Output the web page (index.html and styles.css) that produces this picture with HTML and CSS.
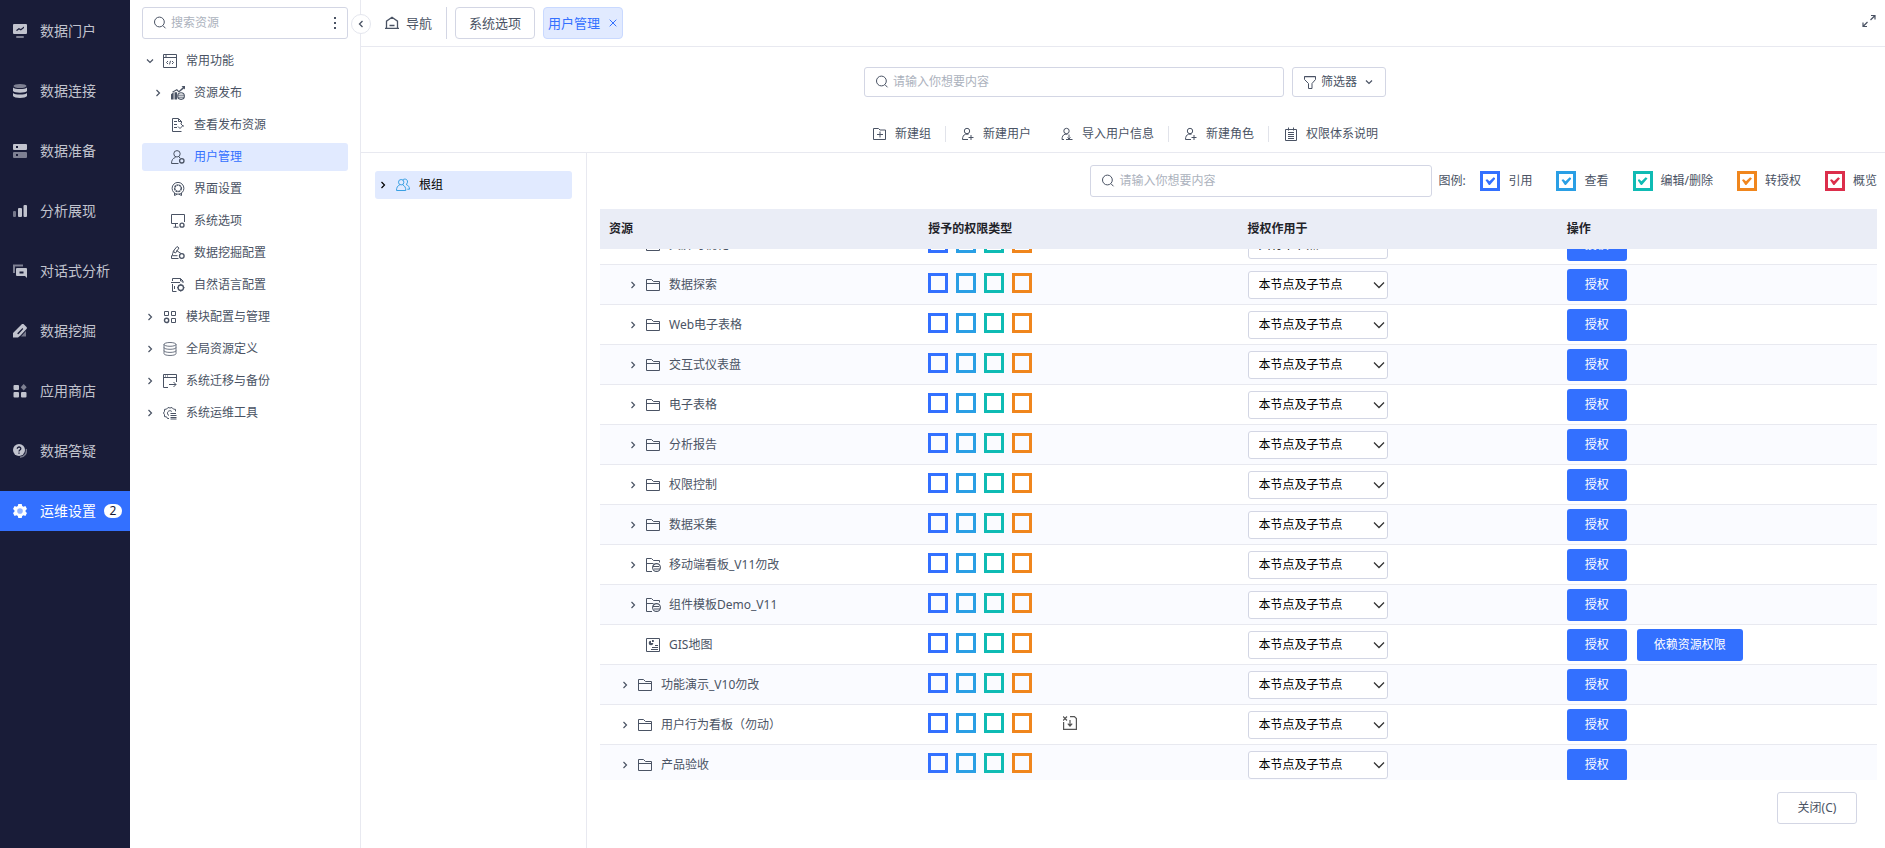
FILE: index.html
```html
<!DOCTYPE html>
<html lang="zh-CN">
<head>
<meta charset="utf-8">
<title>用户管理</title>
<link rel="stylesheet" href="styles.css">
</head>
<body>
<svg class="sprite" aria-hidden="true">
  <symbol id="i-portal" viewBox="0 0 14 14"><path fill="currentColor" fill-rule="evenodd" d="M1 0h12a1 1 0 0 1 1 1v8a1 1 0 0 1-1 1H1a1 1 0 0 1-1-1V1a1 1 0 0 1 1-1zM3 6.2l1 .9 2-1.7 1.9 1L11 4V2.6L7.800 4.900 5.900 3.900z"/><path fill="currentColor" opacity=".6" d="M4 12h6a1 1 0 0 1 0 2H4a1 1 0 0 1 0-2z"/></symbol>
  <symbol id="i-db" viewBox="0 0 14 14"><ellipse cx="7" cy="2" rx="6.500" ry="2" fill="currentColor" opacity=".6"/><path fill="currentColor" d="M0 3.500c2 2 12 2 14 0V7c-1 2.300-13 2.300-14 0zM0 9c2 2 12 2 14 0v3c-1 2.600-13 2.600-14 0z"/></symbol>
  <symbol id="i-server" viewBox="0 0 14 14"><path fill="currentColor" fill-rule="evenodd" d="M1 0h12a1 1 0 0 1 1 1v4a1 1 0 0 1-1 1H1a1 1 0 0 1-1-1V1a1 1 0 0 1 1-1zM3 2v2h2V2z"/><path fill="currentColor" opacity=".6" fill-rule="evenodd" d="M1 8h12a1 1 0 0 1 1 1v4a1 1 0 0 1-1 1H1a1 1 0 0 1-1-1V9a1 1 0 0 1 1-1zM3 10v2h2v-2z"/></symbol>
  <symbol id="i-bars" viewBox="0 0 14 14"><rect x="0" y="7" width="3" height="6" rx="1" fill="currentColor" opacity=".55"/><rect x="5" y="4" width="4" height="9" rx="1" fill="currentColor"/><rect x="10.500" y="1" width="3.500" height="12" rx="1" fill="currentColor"/></symbol>
  <symbol id="i-chat" viewBox="0 0 14 14"><path d="M1 9V1.500h9" fill="none" stroke="currentColor" stroke-width="2" opacity=".6"/><path fill="currentColor" fill-rule="evenodd" d="M4 4h9a1 1 0 0 1 1 1v9l-2-2H4a1 1 0 0 1-1-1V5a1 1 0 0 1 1-1zM6.500 7.500v2h4v-2z"/></symbol>
  <symbol id="i-mine" viewBox="0 0 14 14"><path fill="currentColor" fill-rule="evenodd" d="M9 0c1-.5 1.500 0 2 .5L13.500 3c.6.700.5 1 .2 1.700L7.500 11.500 5 13.500H0V9zM9.500 4L4.500 9c-.5 1 .5 1.500 1.200 1l4.500-5z"/><path fill="currentColor" opacity=".55" d="M13 7v5.500H8z"/></symbol>
  <symbol id="i-apps" viewBox="0 0 14 14"><g fill="currentColor"><rect x=".5" y="1" width="5.500" height="5" rx="1"/><rect x=".5" y="8" width="5.500" height="5.500" rx="1"/><rect x="8" y="8" width="5.500" height="5.500" rx="1"/><path opacity=".6" d="M10.700 0l3 3.200-3 3.200-3-3.200z"/></g></symbol>
  <symbol id="i-qa" viewBox="0 0 14 14"><path opacity=".55" d="M13.300 5c.8 4-1.600 8-6.300 8.200" fill="none" stroke="currentColor" stroke-width="1.400"/><circle cx="6" cy="6" r="6" fill="currentColor"/><path d="M4.300 4.700c0-2.300 3.600-2.200 3.500 0C7.700 6 6 6 6 7.400M6 8.500v1.300" fill="none" stroke="#191c38" stroke-width="1.300"/></symbol>
  <symbol id="i-gear" viewBox="0 0 14 14"><path fill="currentColor" d="M5.300 0h3.400l.5 2 1.300.7 1.900-.6L14 5l-1.400 1.300v1.400L14 9l-1.600 2.900-1.900-.6-1.300.7-.5 2H5.300l-.5-2-1.300-.7-1.900.6L0 9l1.400-1.300V6.300L0 5l1.600-2.900 1.900.6L4.800 2z"/><circle cx="7" cy="7" r="2.800" fill="#94b4ff"/></symbol>
  <symbol id="i-search" viewBox="0 0 14 14"><g fill="none" stroke="currentColor"><circle cx="6.400" cy="6" r="4.900"/><path d="M10 9.700l2.500 2.600"/></g></symbol>
  <symbol id="i-more" viewBox="0 0 4 14"><path fill="currentColor" d="M1 1h2v2H1zM1 6h2v2H1zM1 11h2v2H1z"/></symbol>
  <symbol id="i-right" viewBox="0 0 8 8"><path d="M2.500 1l3 3-3 3" fill="none" stroke="currentColor" stroke-width="1.200"/></symbol>
  <symbol id="i-down" viewBox="0 0 8 8"><path d="M1 2.500l3 3 3-3" fill="none" stroke="currentColor" stroke-width="1.200"/></symbol>
  <symbol id="i-left" viewBox="0 0 8 8"><path d="M5.500 1l-3 3 3 3" fill="none" stroke="currentColor" stroke-width="1.300"/></symbol>
  <symbol id="i-code" viewBox="0 0 14 14"><path fill="none" stroke="currentColor" d="M.5.5h13v13H.5zM.5 3.500h13M2 2h2M5 7L3.500 8.500 5 10M9 7l1.500 1.500L9 10M7.500 6.800l-1 3.600"/></symbol>
  <symbol id="i-publish" viewBox="0 0 16 16"><path fill="currentColor" d="M0 9.500L3 7v8.500H0zM4 7h3v8.500H4zM12 0h4v4l-1.200-1.200L9 7.500 6.500 5 2 7.500 1.300 6.500 6.800 3.500 9 5.800 13.500 1.500z"/><circle cx="11.500" cy="11.500" r="3.800" fill="#fff" stroke="currentColor" stroke-width="1.200"/><path d="M8 10.500h7M8 12.800h7" stroke="currentColor"/></symbol>
  <symbol id="i-docview" viewBox="0 0 14 14"><path fill="none" stroke="currentColor" d="M10.500 13.500h-9V.5h6l3 3v2M3 3.500h3M3 6.500h3M3 9.500h3M7 8.500l2 2L12.500 7M7.500 1v2.500h3M9.500 5.500l3 3"/></symbol>
  <symbol id="i-userset" viewBox="0 0 14 14"><g fill="none" stroke="currentColor"><path d="M7.500 13.500h-7c0-3.500 1.500-5.500 4-6M8 7.200l1.300.8"/><circle cx="6" cy="3.800" r="3.200"/><circle cx="10.800" cy="10.800" r="2.200" stroke-width="1.300"/></g></symbol>
  <symbol id="i-medal" viewBox="0 0 14 14"><g fill="none" stroke="currentColor"><circle cx="7" cy="6.300" r="5.900"/><circle cx="7" cy="6.300" r="3.300" stroke-width="1.500" stroke-dasharray="2.200 .5"/><path d="M3.500 11v2.500L6 12.300M10.500 11v2.500L8 12.300"/></g></symbol>
  <symbol id="i-monitor" viewBox="0 0 14 14"><g fill="none" stroke="currentColor"><path d="M7 9.500H.5v-9h13v7.500M4.500 9.500v3.500M2.500 13.200h5"/><circle cx="11" cy="11.200" r="2" stroke-width="1.300"/></g></symbol>
  <symbol id="i-dig" viewBox="0 0 14 14"><g fill="none" stroke="currentColor"><path d="M7.500 12.500H.5v-2.800h6M1.500 9c0-2 .5-3 2-4M2 5.500l4-5 2 1.500-3.500 5zM5.500 4.500l4.500 3"/><circle cx="10.800" cy="10" r="2.300" stroke-width="1.300"/></g></symbol>
  <symbol id="i-lang" viewBox="0 0 14 14"><g fill="none" stroke="currentColor"><path d="M1.500 6v7.500h4M1.500 3V.5h8l2.500 2.500v2M0 4.500h9M9.500.5V3H12M3.500 8v3"/><circle cx="9.800" cy="9.700" r="2.700" stroke-width="1.300"/><path d="M9.800 5.800v1.200M9.800 12.400v1.400M6 9.700h1M12.600 9.700h1"/></g></symbol>
  <symbol id="i-modules" viewBox="0 0 14 14"><g fill="none" stroke="currentColor"><path d="M1.500 1.500h4v4h-4zM8.500 1.500h4v4h-4zM8.500 8.500h4v4h-4z"/><circle cx="3.600" cy="10.400" r="2.100" stroke-width="1.400"/></g></symbol>
  <symbol id="i-stack" viewBox="0 0 14 14"><g fill="none" stroke="currentColor" stroke-width=".8"><ellipse cx="7" cy="2.400" rx="6" ry="1.900"/><path d="M1 2.400v9.200c0 2.500 12 2.500 12 0V2.400M1 5.500c0 2.400 12 2.400 12 0M1 8.600c0 2.400 12 2.400 12 0"/></g></symbol>
  <symbol id="i-migrate" viewBox="0 0 14 14"><path fill="none" stroke="currentColor" d="M5 13.500H.5V.5h13v7.500M.5 3.500h13M2 2h1M4 2h1M6 10.500h7M10.500 8l2.500 2.500-2.500 2.500"/></symbol>
  <symbol id="i-ops" viewBox="0 0 14 14"><g fill="none" stroke="currentColor"><path d="M6 12.500H4.500L3.600 10.900 1.500 10.600V8.700L.5 7l1-1.700V3.400l2.100-.3L5 1.500 7 2l2-.5 1.400 1.600 2.100.3v2"/><path d="M8.800 5.500a2.500 2.500 0 1 0-2.800 4M7.500 7.500H13M7.500 9.500h6M7.500 11.500h6M7.500 13h6"/></g></symbol>
  <symbol id="i-home" viewBox="0 0 14 14"><path fill="none" stroke="currentColor" stroke-width="1.300" d="M0 12.300h14M1.500 12V5.200L7 1.200l5.500 4V12M4.500 9.500h5"/></symbol>
  <symbol id="i-close" viewBox="0 0 8 8"><path d="M.7.700l6.600 6.600M7.300.7L.7 7.300" stroke="currentColor"/></symbol>
  <symbol id="i-expand" viewBox="0 0 14 14"><path fill="none" stroke="currentColor" stroke-width="1.200" d="M9 1.500h4v4M13 1.500L8.500 6M1 8.500v4h4M1 12.500L5.500 8"/></symbol>
  <symbol id="i-filter" viewBox="0 0 14 14"><path fill="none" stroke="currentColor" d="M1.500 1.500h11v3L9 8.500v5H5.500v-5l-4-4z"/><path d="M1 2h12" stroke="currentColor" opacity=".5"/></symbol>
  <symbol id="i-newgroup" viewBox="0 0 14 14"><path fill="none" stroke="currentColor" d="M.5 12.500V1.500h5l1.500 1.500h5.500v9.500zM4 7.500h6M7 4.500v6"/></symbol>
  <symbol id="i-newuser" viewBox="0 0 14 14"><g fill="none" stroke="currentColor"><circle cx="6" cy="4" r="2.700"/><path d="M7 12.500H1.500c0-3 1-4.500 3-5.300h3M7.500 10.500h5M10 8v5"/></g></symbol>
  <symbol id="i-import" viewBox="0 0 14 14"><g fill="none" stroke="currentColor"><circle cx="6.500" cy="4" r="2.700"/><path d="M4 12.500H2c0-3 1-4.500 3-5.300h2.500M12.500 12.500H6M9 7.500v4.500M7.500 10.500L9 12l1.500-1.500"/></g></symbol>
  <symbol id="i-note" viewBox="0 0 14 14"><path fill="none" stroke="currentColor" d="M1.500 2.500h11v11h-11zM4.500.5v3M9.500.5v3M4 5.500h6M4 7.500h6M4 9.500h6M4 11.500h6"/></symbol>
  <symbol id="i-users" viewBox="0 0 14 14"><g fill="none" stroke="currentColor"><circle cx="5.200" cy="4.200" r="2.700"/><path d="M3.800 6.800C1.500 7.800.5 9.500.5 12.500h9.300c0-3-1-4.700-3.200-5.700M6.700 2C8 .5 11.800.7 11.500 4c-.1 1.300-.8 2-1.500 2.400 2.300.8 3.500 2.600 3.500 4.800h-2.200"/></g></symbol>
  <symbol id="i-folder" viewBox="0 0 16 14"><path fill="none" stroke="currentColor" d="M1.500 12.500v-11h5l2 2h6v9zM1.500 5.500h13"/></symbol>
  <symbol id="i-folderlink" viewBox="0 0 16 14"><g fill="none" stroke="currentColor"><path d="M7 13.500H1.500V.5h5l2 2h6v2M1.500 5.500h7"/><circle cx="11.500" cy="9.500" r="3.900" stroke-width="1.100"/><path d="M8 8.500h6M9 11h6"/></g></symbol>
  <symbol id="i-report" viewBox="0 0 16 14"><path fill="none" stroke="currentColor" d="M1.500.5h13v13h-13zM10 7.500h3M7 9.500h6M6 11.500h7"/><circle cx="6" cy="5" r="2.300" fill="currentColor"/><path fill="#fff" d="M6 5V2h3v3z"/><path fill="currentColor" d="M7 2h1.800v2H7z"/></symbol>
  <symbol id="i-inherit" viewBox="0 0 14 14"><path fill="none" stroke="currentColor" stroke-width="1.200" d="M.6 6v7.400h12.800V2.500l-2-1.900H7M7 4v6M4.800 7.600L7 10l2.200-2.400M0 .5l4 4M4 .5l-4 4"/></symbol>
  <symbol id="i-select" viewBox="0 0 12 8"><path d="M1 1.500l5 5 5-5" fill="none" stroke="currentColor" stroke-width="1.300"/></symbol>
</svg>

<div class="app">
  <nav class="nav" aria-label="主导航">
    <a class="nav-item" href="#"><svg class="ic"><use href="#i-portal"/></svg>数据门户</a>
    <a class="nav-item" href="#"><svg class="ic"><use href="#i-db"/></svg>数据连接</a>
    <a class="nav-item" href="#"><svg class="ic"><use href="#i-server"/></svg>数据准备</a>
    <a class="nav-item" href="#"><svg class="ic"><use href="#i-bars"/></svg>分析展现</a>
    <a class="nav-item" href="#"><svg class="ic"><use href="#i-chat"/></svg>对话式分析</a>
    <a class="nav-item" href="#"><svg class="ic"><use href="#i-mine"/></svg>数据挖掘</a>
    <a class="nav-item" href="#"><svg class="ic"><use href="#i-apps"/></svg>应用商店</a>
    <a class="nav-item" href="#"><svg class="ic"><use href="#i-qa"/></svg>数据答疑</a>
    <a class="nav-item active" href="#"><svg class="ic"><use href="#i-gear"/></svg>运维设置<span class="badge">2</span></a>
  </nav>

  <aside class="side">
    <div class="field side-search">
      <svg class="ic"><use href="#i-search"/></svg>
      <input type="text" placeholder="搜索资源" aria-label="搜索资源">
      <button class="plain" type="button" aria-label="更多"><svg class="ic-more"><use href="#i-more"/></svg></button>
    </div>
    <a class="node" href="#"><svg class="chev"><use href="#i-down"/></svg><svg class="ic"><use href="#i-code"/></svg>常用功能</a>
    <a class="node sub" href="#"><svg class="chev"><use href="#i-right"/></svg><svg class="ic"><use href="#i-publish"/></svg>资源发布</a>
    <a class="node sub" href="#"><span class="chev"></span><svg class="ic"><use href="#i-docview"/></svg>查看发布资源</a>
    <a class="node sub active" href="#"><span class="chev"></span><svg class="ic"><use href="#i-userset"/></svg><span class="node-name">用户管理</span></a>
    <a class="node sub" href="#"><span class="chev"></span><svg class="ic"><use href="#i-medal"/></svg>界面设置</a>
    <a class="node sub" href="#"><span class="chev"></span><svg class="ic"><use href="#i-monitor"/></svg>系统选项</a>
    <a class="node sub" href="#"><span class="chev"></span><svg class="ic"><use href="#i-dig"/></svg>数据挖掘配置</a>
    <a class="node sub" href="#"><span class="chev"></span><svg class="ic"><use href="#i-lang"/></svg>自然语言配置</a>
    <a class="node" href="#"><svg class="chev"><use href="#i-right"/></svg><svg class="ic"><use href="#i-modules"/></svg>模块配置与管理</a>
    <a class="node" href="#"><svg class="chev"><use href="#i-right"/></svg><svg class="ic"><use href="#i-stack"/></svg>全局资源定义</a>
    <a class="node" href="#"><svg class="chev"><use href="#i-right"/></svg><svg class="ic"><use href="#i-migrate"/></svg>系统迁移与备份</a>
    <a class="node" href="#"><svg class="chev"><use href="#i-right"/></svg><svg class="ic"><use href="#i-ops"/></svg>系统运维工具</a>
    <button class="collapse" type="button" aria-label="收起"><svg class="chev"><use href="#i-left"/></svg></button>
  </aside>

  <main class="main">
    <header class="tabs">
      <a class="home" href="#"><svg class="ic"><use href="#i-home"/></svg>导航</a>
      <button class="tab" type="button">系统选项</button>
      <div class="tab current">用户管理<button class="plain" type="button" aria-label="关闭标签"><svg class="chev"><use href="#i-close"/></svg></button></div>
      <button class="plain expand" type="button" aria-label="全屏"><svg class="ic"><use href="#i-expand"/></svg></button>
    </header>

    <section class="tools">
      <div class="find">
        <div class="field find-field"><svg class="ic"><use href="#i-search"/></svg><input type="text" placeholder="请输入你想要内容" aria-label="搜索用户"></div>
        <button class="filter" type="button"><svg class="ic"><use href="#i-filter"/></svg>筛选器<svg class="chev"><use href="#i-down"/></svg></button>
      </div>
      <div class="actions">
        <button class="action" type="button"><svg class="ic"><use href="#i-newgroup"/></svg>新建组</button>
        <span class="sep"></span>
        <button class="action" type="button"><svg class="ic"><use href="#i-newuser"/></svg>新建用户</button>
        <button class="action" type="button"><svg class="ic"><use href="#i-import"/></svg>导入用户信息</button>
        <span class="sep"></span>
        <button class="action" type="button"><svg class="ic"><use href="#i-newuser"/></svg>新建角色</button>
        <span class="sep"></span>
        <button class="action" type="button"><svg class="ic"><use href="#i-note"/></svg>权限体系说明</button>
      </div>
    </section>

    <div class="work">
      <div class="groups">
        <a class="group" href="#"><svg class="chev"><use href="#i-right"/></svg><svg class="ic users"><use href="#i-users"/></svg>根组</a>
      </div>
      <section class="grants">
        <div class="legend">
          <div class="field legend-field"><svg class="ic"><use href="#i-search"/></svg><input type="text" placeholder="请输入你想要内容" aria-label="搜索资源权限"></div>
          <span class="legend-title">图例:</span>
          <label class="key"><input class="box c1" type="checkbox" checked>引用</label>
          <label class="key"><input class="box c2" type="checkbox" checked>查看</label>
          <label class="key"><input class="box c3" type="checkbox" checked>编辑/删除</label>
          <label class="key"><input class="box c4" type="checkbox" checked>转授权</label>
          <label class="key"><input class="box c5" type="checkbox" checked>概览</label>
        </div>
        <div class="scroll" id="scroll">
          <table class="grid">
            <thead><tr><th>资源</th><th>授予的权限类型</th><th>授权作用于</th><th>操作</th></tr></thead>
            <tbody id="rows"></tbody>
          </table>
        </div>
        <footer class="foot"><button class="close" type="button">关闭(C)</button></footer>
      </section>
    </div>
  </main>
</div>
<script src="app.js"></script>
</body>
</html>
```
FILE: styles.css
```css
* { box-sizing: border-box; }

body {
  margin: 0;
  background: #fff;
  color: #4a5364;
  font: 12px/20px "Noto Sans", "Noto Sans CJK SC", sans-serif;
}

button, input, select { font: inherit; color: inherit; margin: 0; }
button { cursor: pointer; }
a { color: inherit; text-decoration: none; }
svg { display: block; flex: none; }

.sprite { display: none; }
.ic { width: 14px; height: 14px; }
.chev { width: 8px; height: 8px; flex: none; }
.plain { border: 0; background: none; padding: 0; }

.app { display: flex; height: 100vh; }

/* main navigation */
.nav {
  flex: none;
  width: 130px;
  padding-top: 11px;
  background: #191c38;
  color: #c1c3ce;
  font-size: 14px;
}
.nav-item {
  display: flex;
  align-items: center;
  height: 40px;
  margin-bottom: 20px;
  padding-left: 13px;
  white-space: nowrap;
}
.nav-item .ic { margin-right: 13px; }
.nav-item.active { background: #3370ff; color: #fff; }
.badge {
  margin-left: 8px;
  width: 18px;
  border-radius: 7px;
  background: #fff;
  color: #191c38;
  font-size: 12px;
  line-height: 14px;
  text-align: center;
}

/* resource tree */
.side {
  position: relative;
  flex: none;
  width: 231px;
  padding: 7px 12px;
  border-right: 1px solid #e8e9f0;
}
.field {
  display: flex;
  align-items: center;
  height: 32px;
  padding: 0 10px;
  border: 1px solid #d3d6e4;
  border-radius: 3px;
  background: #fff;
}
.field input {
  flex: 1;
  min-width: 0;
  padding: 0 0 0 4px;
  border: 0;
  outline: 0;
  background: none;
}
.field input::placeholder { color: #acb2bd; opacity: 1; }
.side-search { margin-bottom: 8px; }
.ic-more { width: 4px; height: 14px; }
.node, .group {
  display: flex;
  align-items: center;
  height: 28px;
  margin-bottom: 4px;
  padding-left: 4px;
  border-radius: 3px;
  white-space: nowrap;
}
.node.sub { padding-left: 12px; }
.node .ic { margin: 0 9px; }
.node.active, .group { background: #e1eaff; }
.node.active .node-name { color: #3370ff; }
.collapse {
  position: absolute;
  top: 14px;
  right: -11px;
  z-index: 1;
  display: grid;
  place-items: center;
  width: 20px;
  height: 20px;
  padding: 0;
  border: 1px solid #e4e6ee;
  border-radius: 50%;
  background: #fff;
}

/* header tabs */
.main { flex: 1; min-width: 0; display: flex; flex-direction: column; }
.tabs {
  display: flex;
  align-items: center;
  height: 47px;
  padding: 0 9px 0 24px;
  border-bottom: 1px solid #e8e9f0;
  font-size: 13px;
}
.home {
  display: flex;
  align-items: center;
  gap: 7px;
  height: 32px;
  margin-right: 8px;
  padding-right: 14px;
  border-right: 1px solid #d3d6e4;
}
.tab {
  height: 32px;
  width: 80px;
  margin-right: 8px;
  padding: 0;
  border: 1px solid #d3d6e4;
  border-radius: 4px;
  background: #fff;
}
.tab.current {
  display: flex;
  align-items: center;
  justify-content: space-between;
  padding: 0 5px 0 4px;
  border-color: #c9d9ff;
  background: #e1eaff;
  color: #3370ff;
}
.expand { margin-left: auto; padding-bottom: 4px; }

/* toolbar */
.tools {
  display: flex;
  flex-direction: column;
  align-items: center;
  padding: 20px 0 6px 4px;
  border-bottom: 1px solid #e8e9f0;
}
.find { display: flex; gap: 8px; margin-bottom: 24px; }
.find-field { width: 420px; height: 30px; }
.filter {
  display: flex;
  align-items: center;
  width: 94px;
  height: 30px;
  padding: 0 0 0 10px;
  border: 1px solid #d3d6e4;
  border-radius: 3px;
  background: #fff;
}
.filter .ic { margin-right: 4px; }
.filter .chev { margin-left: 8px; }
.actions { display: flex; align-items: center; }
.action {
  display: flex;
  align-items: center;
  gap: 8px;
  height: 25px;
  padding: 0 14px 0 15px;
  border: 0;
  background: none;
}
.sep { width: 1px; height: 16px; background: #e1e3ea; }

/* work area */
.work { flex: 1; min-height: 0; display: flex; }
.groups {
  flex: none;
  width: 226px;
  padding: 18px 14px;
  border-right: 1px solid #e8e9f0;
}
.group { color: #000; }
.group .ic { margin: 0 9px; }
.users { color: #3aa0e3; }
.grants {
  flex: 1;
  min-width: 0;
  display: flex;
  flex-direction: column;
  padding: 12px 8px 0 13px;
}
.legend {
  display: flex;
  align-items: center;
  justify-content: flex-end;
  gap: 24px;
  margin-bottom: 12px;
}
.legend-field { width: 342px; margin-right: -18px; }
.legend-title { width: 28px; margin-right: -10px; white-space: nowrap; }
.key { display: flex; align-items: center; gap: 8px; white-space: nowrap; }

.box {
  appearance: none;
  flex: none;
  display: grid;
  place-items: center;
  width: 20px;
  height: 20px;
  border: 3px solid;
}
.box:checked::after {
  content: "";
  width: 10px;
  height: 8px;
  background: currentColor;
  clip-path: polygon(0 38%, 18% 28%, 40% 54%, 82% 4%, 100% 20%, 44% 100%, 34% 100%);
}
.c1 { color: #3370ff; }
.c2 { color: #2a9fe5; }
.c3 { color: #0fbbb4; }
.c4 { color: #f0861d; }
.c5 { color: #dc2e4b; }

/* grant table */
.scroll { flex: 1; min-height: 0; overflow: auto; scrollbar-width: none; }
.grid { width: 100%; table-layout: fixed; border-spacing: 0; }
.grid th {
  position: sticky;
  top: 0;
  z-index: 2;
  height: 40px;
  padding: 0 9px;
  background: #eaedf6;
  color: #1f2329;
  font-weight: 700;
  text-align: left;
}
.grid td { height: 40px; padding: 0 9px; border-bottom: 1px solid #e8e9f0; }
.grid tr:nth-child(even) td { background: #fafbff; }
.res, .perms, .ops { display: flex; align-items: center; white-space: nowrap; }
.res { gap: 8px; padding-left: 12px; }
.res.deep { padding-left: 20px; }
.res-ic { width: 16px; height: 14px; }
.perms { gap: 8px; padding-bottom: 3px; }
.inherit { margin-left: 23px; color: #555; }
.scope { position: relative; display: block; width: 140px; color: #000; }
.scope select {
  display: block;
  appearance: none;
  width: 100%;
  height: 28px;
  padding: 0 10px;
  border: 1px solid #d3d6e4;
  border-radius: 3px;
  background: #fff;
}
.scope svg {
  position: absolute;
  top: 10px;
  right: 3px;
  width: 12px;
  height: 8px;
  color: #333;
  pointer-events: none;
}
.ops { gap: 10px; }
.btn {
  height: 32px;
  min-width: 60px;
  padding: 0 17px;
  border: 0;
  border-radius: 3px;
  background: #3370ff;
  color: #fff;
}
.foot { display: flex; justify-content: flex-end; padding: 12px 20px 24px 0; }
.close {
  width: 80px;
  height: 32px;
  padding: 0;
  border: 1px solid #d3d6e4;
  border-radius: 3px;
  background: #fff;
}
```
FILE: app.js
```js
const resources = [
  { name: "大屏可视化", icon: "folder", deep: true },
  { name: "数据探索", icon: "folder", deep: true },
  { name: "Web电子表格", icon: "folder", deep: true },
  { name: "交互式仪表盘", icon: "folder", deep: true },
  { name: "电子表格", icon: "folder", deep: true },
  { name: "分析报告", icon: "folder", deep: true },
  { name: "权限控制", icon: "folder", deep: true },
  { name: "数据采集", icon: "folder", deep: true },
  { name: "移动端看板_V11勿改", icon: "folderlink", deep: true },
  { name: "组件模板Demo_V11", icon: "folderlink", deep: true },
  { name: "GIS地图", icon: "report", deep: true, leaf: true },
  { name: "功能演示_V10勿改", icon: "folder" },
  { name: "用户行为看板（勿动）", icon: "folder", inherit: true },
  { name: "产品验收", icon: "folder" }
];
const permissions = ["引用", "查看", "编辑/删除", "转授权"];

const icon = (id, cls) => `<svg class="${cls}"><use href="#i-${id}"/></svg>`;

const row = (r, i) => `
  <tr>
    <td><div class="res${r.deep ? " deep" : ""}">
      ${r.leaf ? '<span class="chev"></span>' : icon("right", "chev")}${icon(r.icon, "res-ic")}${r.name}
    </div></td>
    <td><div class="perms">
      ${permissions.map((p, n) => `<input class="box c${n + 1}" type="checkbox" aria-label="${r.name} ${p}">`).join("")}
      ${r.inherit ? icon("inherit", "ic inherit") : ""}
    </div></td>
    <td><div class="scope">
      <select aria-label="${r.name} 授权作用于"><option>本节点及子节点</option><option${i === 0 ? " selected" : ""}>只有本节点</option></select>
      ${icon("select", "")}
    </div></td>
    <td><div class="ops">
      <button class="btn" type="button">授权</button>
      ${r.leaf ? '<button class="btn" type="button">依赖资源权限</button>' : ""}
    </div></td>
  </tr>`;

document.getElementById("rows").innerHTML = resources.map(row).join("");
document.getElementById("scroll").scrollTop = 24;
```
